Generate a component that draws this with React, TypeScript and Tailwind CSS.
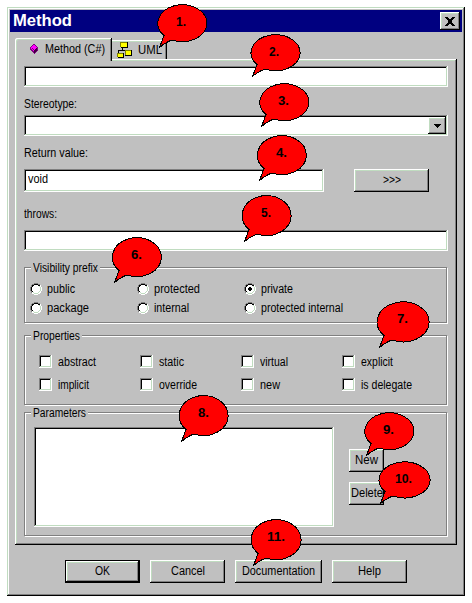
import { useLayoutEffect, useRef, type ReactNode } from "react";

const raised =
  "bg-[#c0c0c0] shadow-[inset_-1px_-1px_0_#000,inset_1px_1px_0_#fff,inset_-2px_-2px_0_#808080,inset_2px_2px_0_#c0dcc0]";
const sunken =
  "bg-white shadow-[inset_-1px_-1px_0_#fff,inset_1px_1px_0_#808080,inset_-2px_-2px_0_#c0dcc0,inset_2px_2px_0_#000]";

// Text condensed or widened to a fixed advance width.
function T({ children, w, className = "" }: { children: string; w: number; className?: string }) {
  const ref = useRef<HTMLSpanElement>(null);
  useLayoutEffect(() => {
    const el = ref.current;
    if (!el) return;
    el.style.transform = "none";
    const natural = el.getBoundingClientRect().width;
    el.style.transform = `scaleX(${w / natural})`;
  }, [w]);
  return (
    <span className={`block h-[14px] leading-[14px] ${className}`} style={{ width: w }}>
      <span ref={ref} className="inline-block origin-left whitespace-pre">
        {children}
      </span>
    </span>
  );
}

function Button({ label, w, className }: { label: string; w: number; className: string }) {
  return (
    <button className={`flex h-[23px] shrink-0 justify-center pt-1 ${raised} ${className}`}>
      <T w={w}>{label}</T>
    </button>
  );
}

function Group({ title, w, className, children }: { title: string; w: number; className: string; children: ReactNode }) {
  return (
    <section className={`relative w-[424px] ${className}`}>
      <div className="absolute inset-0 border border-[#808080] shadow-[inset_1px_1px_0_#fff,1px_1px_0_#fff] right-px bottom-px" />
      <div className="absolute left-[7px] -top-[6px] bg-[#c0c0c0] pl-[2px] pr-[2px]">
        <T w={w}>{title}</T>
      </div>
      <div className="relative">{children}</div>
    </section>
  );
}

function Radio({ label, w, on = false }: { label: string; w: number; on?: boolean }) {
  return (
    <label className="flex h-[14px] items-start gap-[5px]">
      <svg width="12" height="12" viewBox="0 0 12 12" className="mt-px shrink-0" shapeRendering="crispEdges">
        <path d="M4 1h4v1h2v2h1v4h-1v2H8v1H4v-1H2V8H1V4h1V2h2z" fill="#fff" />
        <path d="M4 0h4v1H4zM2 1h2v1H2zM8 1h2v1H8zM1 2h1v2H1zM0 4h1v4H0zM1 8h1v2H1z" fill="#808080" />
        <path d="M4 1h4v1H4zM2 2h2v1H2zM8 2h2v1H8zM2 3h1v1H2zM1 4h1v4H1zM2 8h1v1H2z" fill="#000" />
        <path d="M9 3h1v1H9zM10 4h1v4h-1zM9 8h1v1H9zM8 9h1v1H8zM3 9h1v1H3zM4 10h4v1H4z" fill="#c0dcc0" />
        <path d="M10 2h1v2h-1zM11 4h1v4h-1zM10 8h1v2h-1zM8 10h2v1H8zM2 10h2v1H2zM4 11h4v1H4z" fill="#fff" />
        {on && <path d="M5 4h2v1h1v2H7v1H5V7H4V5h1z" fill="#000" />}
      </svg>
      <T w={w}>{label}</T>
    </label>
  );
}

function Check({ label, w }: { label: string; w: number }) {
  return (
    <label className="flex h-[14px] w-[101px] items-start gap-[6px]">
      <span className={`block size-[13px] shrink-0 ${sunken}`} />
      <T w={w}>{label}</T>
    </label>
  );
}

function CloseIcon() {
  return (
    <svg width="10" height="9" viewBox="0 0 10 9" fill="#000" shapeRendering="crispEdges">
      <path d="M0 0h3v1H0zM7 0h3v1H7zM1 1h3v1H1zM6 1h3v1H6zM2 2h6v1H2zM3 3h4v3H3zM2 6h6v1H2zM1 7h3v1H1zM6 7h3v1H6zM0 8h3v1H0zM7 8h3v1H7z" />
    </svg>
  );
}

function MethodIcon() {
  return (
    <svg width="8" height="10" viewBox="0 0 8 10" shapeRendering="crispEdges">
      <path d="M3 0h2v1h1v1h1v1h1v4H7v1H6v1H5v1H4V9H3V8H2V7H1V6H0V3h1V2h1V1h1z" fill="#800080" />
      <path d="M3 1h2v1h1v1h1v1H6v1H5v1H4V5H3V4H2V5h1v1h1v1h1v1H4V7H3V6H2V5H1V3h1V2h1z M2 3h4v1H5v1H3V4H2z" fill="#f0f" />
      <path d="M4 6h1v3H4zM5 5h1v3H5zM6 4h1v3H6z" fill="#400040" />
    </svg>
  );
}

function UmlIcon() {
  return (
    <svg width="16" height="16" viewBox="0 0 16 16" shapeRendering="crispEdges">
      <path d="M5 5h1v4H5zM1 8h8v1H1zM1 8h1v4H1z" fill="#000" />
      <path d="M4 0h7v6H4zM1 11h6v5H1zM8 8h7v6H8z" fill="#000" />
      <path d="M3 0h7v5H3zM0 11h6v4H0zM8 8h6v5H8z" fill="#808000" />
      <path d="M4 1h6v4H4zM1 12h5v3H1zM9 9h5v4H9z" fill="#ff0" />
    </svg>
  );
}

interface Callout { n: string; x: number; y: number; w: number; h: number; tw: number }

const callouts: Callout[] = [
  { n: "1.", x: 157, y: 4, w: 50, h: 38, tw: 10 },
  { n: "2.", x: 250, y: 34, w: 50, h: 37, tw: 10 },
  { n: "3.", x: 259, y: 83, w: 50, h: 38, tw: 11 },
  { n: "4.", x: 257, y: 135, w: 50, h: 40, tw: 11 },
  { n: "5.", x: 242, y: 195, w: 50, h: 41, tw: 10 },
  { n: "6.", x: 112, y: 237, w: 50, h: 40, tw: 11 },
  { n: "7.", x: 377, y: 301, w: 53, h: 41, tw: 11 },
  { n: "8.", x: 179, y: 395, w: 50, h: 41, tw: 11 },
  { n: "9.", x: 364, y: 412, w: 50, h: 38, tw: 11 },
  { n: "10.", x: 378, y: 461, w: 52, h: 37, tw: 17 },
  { n: "11.", x: 251, y: 519, w: 51, h: 41, tw: 18 },
];

function Bubble({ n, x, y, w, h, tw }: Callout) {
  const cx = w / 2;
  const cy = h / 2;
  return (
    <div className="absolute" style={{ left: x, top: y, width: w, height: h }}>
      <svg width={w + 2} height={h + 8} className="absolute left-0 top-0" shapeRendering="crispEdges">
        <path
          d={`M7 ${h - 6.5} A${cx - 0.5} ${cy - 0.5} 0 1 1 15 ${h - 2} Q9 ${h} 2.5 ${h + 5.5} Z`}
          fill="#f00"
          stroke="#000"
        />
      </svg>
      <div className="absolute top-[11px] text-[13px] font-bold" style={{ left: (w - tw) / 2 - 1 }}>
        <T w={tw}>{n}</T>
      </div>
    </div>
  );
}

export default function App() {
  return (
    <div className="relative h-[603px] w-[472px] overflow-hidden bg-white pl-[7px] pt-[7px] font-['Liberation_Sans',sans-serif] text-[12px] text-black">
      <main className="h-[589px] w-[458px] bg-[#c0c0c0] p-[3px] shadow-[inset_-1px_-1px_0_#000,inset_1px_1px_0_#c0dcc0,inset_-2px_-2px_0_#808080,inset_2px_2px_0_#fff]">
        <header className="flex h-[22px] items-start justify-between bg-[#000080] pl-[3px] pr-[2px] pt-[2px] text-white">
          <T w={59} className="mt-[2px] text-[16px] font-bold">Method</T>
          <button className={`flex h-[18px] w-[20px] items-center justify-center ${raised}`}>
            <CloseIcon />
          </button>
        </header>

        <nav className="ml-[5px] flex h-[27px] items-end">
          <div className="relative z-10 -mb-[2px] flex h-[23px] w-[97px] rounded-tl-[2px] bg-[#c0c0c0] pl-[15px] pt-1 shadow-[inset_-1px_0_0_#000,inset_1px_1px_0_#fff,inset_-2px_0_0_#808080,inset_2px_2px_0_#c0dcc0]">
            <span className="mt-[2px]"><MethodIcon /></span>
            <T w={60} className="ml-[7px]">Method (C#)</T>
          </div>
          <div className="flex h-[19px] w-[55px] pl-[5px] pt-[2px] shadow-[inset_-1px_0_0_#000,inset_0_1px_0_#fff,inset_-2px_0_0_#808080,inset_0_2px_0_#c0dcc0]">
            <UmlIcon />
            <T w={24} className="ml-[5px] mt-px">UML</T>
          </div>
        </nav>

        <section className={`ml-[5px] h-[486px] w-[442px] pl-[9px] pt-[7px] ${raised}`}>
          <div className={`h-[21px] w-[424px] ${sunken}`} />
          <T w={53} className="mt-[10px]">Stereotype:</T>
          <div className={`mt-[4px] flex h-[21px] w-[424px] justify-end p-[2px] ${sunken}`}>
            <button className={`flex h-[17px] w-[18px] items-center justify-center ${raised}`}>
              <svg width="7" height="4" fill="#000" shapeRendering="crispEdges">
                <path d="M0 0h7v1H6v1H5v1H4v1H3V3H2V2H1V1H0z" />
              </svg>
            </button>
          </div>
          <T w={64} className="mt-[10px]">Return value:</T>
          <div className="mt-[9px] flex gap-[30px]">
            <div className={`h-[23px] w-[300px] pl-[4px] pt-[3px] ${sunken}`}>
              <T w={20}>void</T>
            </div>
            <Button label=">>>" w={18} className="w-[75px]" />
          </div>
          <T w={33} className="mt-[15px]">throws:</T>
          <div className={`mt-[9px] h-[21px] w-[424px] ${sunken}`} />

          <Group title="Visibility prefix" w={65} className="mt-[16px] h-[57px]">
            <div className="grid grid-cols-[107px_107px_auto] gap-y-[5px] pl-[6px] pt-[15px]">
              <Radio label="public" w={28} />
              <Radio label="protected" w={46} />
              <Radio label="private" w={32} on />
              <Radio label="package" w={42} />
              <Radio label="internal" w={35} />
              <Radio label="protected internal" w={82} />
            </div>
          </Group>

          <Group title="Properties" w={47} className="mt-[11px] h-[71px]">
            <div className="grid grid-cols-[repeat(4,101px)] gap-y-[9px] pl-[15px] pt-[20px]">
              <Check label="abstract" w={38} />
              <Check label="static" w={25} />
              <Check label="virtual" w={28} />
              <Check label="explicit" w={32} />
              <Check label="implicit" w={31} />
              <Check label="override" w={38} />
              <Check label="new" w={20} />
              <Check label="is delegate" w={51} />
            </div>
          </Group>

          <Group title="Parameters" w={53} className="mt-[6px] h-[125px]">
            <div className="flex gap-[15px] pl-[10px] pt-[15px]">
              <div className={`h-[100px] w-[300px] ${sunken}`} />
              <div className="flex flex-col gap-[10px] pt-[22px]">
                <Button label="New" w={23} className="w-[35px]" />
                <Button label="Delete" w={32} className="w-[35px]" />
              </div>
            </div>
          </Group>
        </section>

        <footer className="flex gap-[10px] pl-[55px] pt-[15px]">
          <button className="h-[23px] w-[75px] bg-black p-px">
            <span className={`flex h-[21px] w-[73px] justify-center pt-[3px] ${raised}`}>
              <T w={15}>OK</T>
            </span>
          </button>
          <Button label="Cancel" w={34} className="w-[75px]" />
          <Button label="Documentation" w={73} className="w-[87px]" />
          <Button label="Help" w={23} className="w-[75px]" />
        </footer>
      </main>

      {callouts.map((c) => (
        <Bubble key={c.n} {...c} />
      ))}
    </div>
  );
}
